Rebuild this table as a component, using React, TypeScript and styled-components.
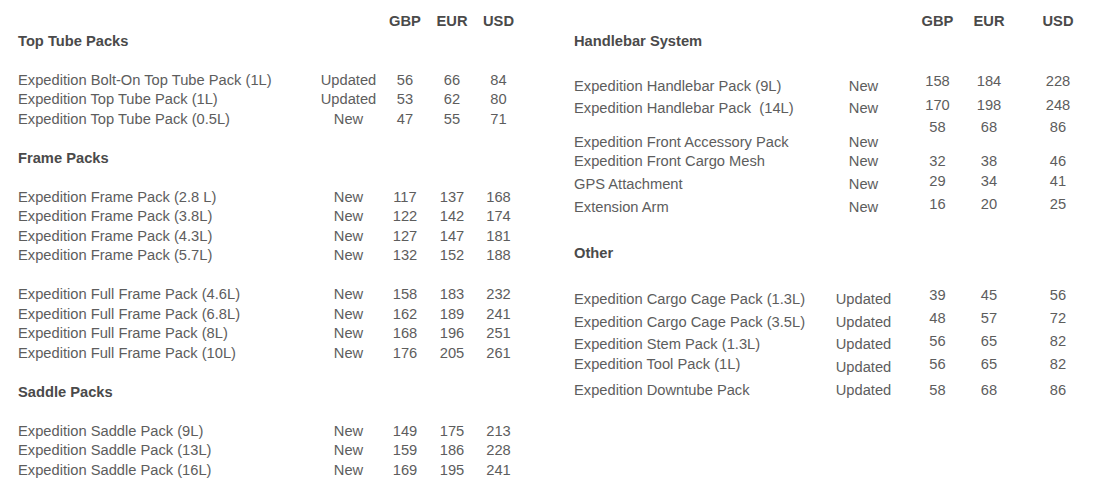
import React from 'react';
import styled, { createGlobalStyle } from 'styled-components';

// drops are how far a cell sits below the top of its row (the scan is not level)
type Item = {
  name: string;
  status: string;
  prices?: number[];
  h?: number;
  nd?: number;
  sd?: number;
  pd?: number;
};

type Section = {
  title: string;
  titleGap?: number;
  rowsGap?: number;
  groups: Item[][];
};

const LEFT_COLS = '297px 67px 46px 48px 45px';
const RIGHT_COLS = '241px 97px 51px 52px 86px';

const leftSections: Section[] = [
  {
    title: 'Top Tube Packs',
    groups: [
      [
        { name: 'Expedition Bolt-On Top Tube Pack (1L)', status: 'Updated', prices: [56, 66, 84] },
        { name: 'Expedition Top Tube Pack (1L)', status: 'Updated', prices: [53, 62, 80] },
        { name: 'Expedition Top Tube Pack (0.5L)', status: 'New', prices: [47, 55, 71] },
      ],
    ],
  },
  {
    title: 'Frame Packs',
    groups: [
      [
        { name: 'Expedition Frame Pack (2.8 L)', status: 'New', prices: [117, 137, 168] },
        { name: 'Expedition Frame Pack (3.8L)', status: 'New', prices: [122, 142, 174] },
        { name: 'Expedition Frame Pack (4.3L)', status: 'New', prices: [127, 147, 181] },
        { name: 'Expedition Frame Pack (5.7L)', status: 'New', prices: [132, 152, 188] },
      ],
      [
        { name: 'Expedition Full Frame Pack (4.6L)', status: 'New', prices: [158, 183, 232] },
        { name: 'Expedition Full Frame Pack (6.8L)', status: 'New', prices: [162, 189, 241] },
        { name: 'Expedition Full Frame Pack (8L)', status: 'New', prices: [168, 196, 251] },
        { name: 'Expedition Full Frame Pack (10L)', status: 'New', prices: [176, 205, 261] },
      ],
    ],
  },
  {
    title: 'Saddle Packs',
    groups: [
      [
        { name: 'Expedition Saddle Pack (9L)', status: 'New', prices: [149, 175, 213] },
        { name: 'Expedition Saddle Pack (13L)', status: 'New', prices: [159, 186, 228] },
        { name: 'Expedition Saddle Pack (16L)', status: 'New', prices: [169, 195, 241] },
      ],
    ],
  },
];

const rightSections: Section[] = [
  {
    title: 'Handlebar System',
    rowsGap: 21,
    groups: [
      [
        { name: 'Expedition Handlebar Pack (9L)', status: 'New', prices: [158, 184, 228], h: 22, nd: 5.5, pd: 1.2 },
        { name: 'Expedition Handlebar Pack  (14L)', status: 'New', prices: [170, 198, 248], h: 23, nd: 6, pd: 2.5 },
        { name: 'Expedition Front Accessory Pack', status: 'New', prices: [58, 68, 86], h: 34, nd: 17, pd: 1.8 },
        { name: 'Expedition Front Cargo Mesh', status: 'New', prices: [32, 38, 46], h: 21, nd: 2.2, pd: 2.2 },
        { name: 'GPS Attachment', status: 'New', prices: [29, 34, 41], h: 22, nd: 3.8, pd: 0.5 },
        { name: 'Extension Arm', status: 'New', prices: [16, 20, 25], h: 22, nd: 4.8, pd: 1.5 },
      ],
    ],
  },
  {
    title: 'Other',
    titleGap: 27.5,
    rowsGap: 23,
    groups: [
      [
        { name: 'Expedition Cargo Cage Pack (1.3L)', status: 'Updated', prices: [39, 45, 56], h: 23, nd: 4.8, pd: 0.5 },
        { name: 'Expedition Cargo Cage Pack (3.5L)', status: 'Updated', prices: [48, 57, 72], h: 23, nd: 4.8, pd: 0.8 },
        { name: 'Expedition Stem Pack (1.3L)', status: 'Updated', prices: [56, 65, 82], h: 22, nd: 3.8, pd: 0.5 },
        { name: 'Expedition Tool Pack (1L)', status: 'Updated', prices: [56, 65, 82], h: 23, nd: 1.5, sd: 4.8, pd: 1.5 },
        { name: 'Expedition Downtube Pack', status: 'Updated', prices: [58, 68, 86], h: 24, nd: 5.2, pd: 5.2 },
      ],
    ],
  },
];

const GlobalStyle = createGlobalStyle`
  html, body {
    margin: 0;
    padding: 0;
    background: #ffffff;
    overflow: hidden;
  }
  body {
    font-family: "Liberation Sans", Arial, Helvetica, sans-serif;
    font-size: 14.7px;
    color: #5d5d5d;
  }
`;

const Page = styled.main`
  display: flex;
  align-items: flex-start;
  gap: 53px;
  width: 1101px;
  height: 500px;
  padding: 12px 0 0 18px;
  box-sizing: border-box;
`;

const Column = styled.section`
  display: flex;
  flex-direction: column;
`;

const Line = styled.div<{ $cols: string; $h?: number }>`
  display: grid;
  grid-template-columns: ${(p) => p.$cols};
  height: ${(p) => p.$h ?? 19.5}px;
  align-items: center;
  line-height: 17px;
`;

const Name = styled.span<{ $drop?: number }>`
  white-space: pre;
  ${(p) => (p.$drop === undefined ? '' : `align-self: start; margin-top: ${p.$drop}px;`)}
`;

const Center = styled.span<{ $drop?: number }>`
  text-align: center;
  white-space: nowrap;
  ${(p) => (p.$drop === undefined ? '' : `align-self: start; margin-top: ${p.$drop}px;`)}
`;

const Currency = styled.span`
  text-align: center;
  font-weight: bold;
  color: #4a4a4a;
`;

const SectionTitle = styled.h2<{ $gap: number }>`
  margin: ${(p) => p.$gap}px 0 0;
  height: 19.5px;
  line-height: 19.5px;
  font-size: 14.7px;
  font-weight: bold;
  color: #4a4a4a;
`;

const Rows = styled.div<{ $gap: number }>`
  margin-top: ${(p) => p.$gap}px;
  display: flex;
  flex-direction: column;
`;

const Table = ({ sections, cols }: { sections: Section[]; cols: string }) => (
  <Column>
    <Line $cols={cols}>
      <span />
      <span />
      <Currency>GBP</Currency>
      <Currency>EUR</Currency>
      <Currency>USD</Currency>
    </Line>
    {sections.map((s, si) => (
      <React.Fragment key={s.title}>
        <SectionTitle $gap={si === 0 ? 0 : s.titleGap ?? 19.5}>{s.title}</SectionTitle>
        {s.groups.map((g, gi) => (
          <Rows key={gi} $gap={gi === 0 ? s.rowsGap ?? 19.5 : 19.5}>
            {g.map((r) => (
              <Line key={r.name} $cols={cols} $h={r.h}>
                <Name $drop={r.nd}>{r.name}</Name>
                <Center $drop={r.sd ?? r.nd}>{r.status}</Center>
                {r.prices?.map((n, i) => (
                  <Center key={i} $drop={r.pd}>
                    {n}
                  </Center>
                ))}
              </Line>
            ))}
          </Rows>
        ))}
      </React.Fragment>
    ))}
  </Column>
);

const App = () => (
  <>
    <GlobalStyle />
    <Page>
      <Table sections={leftSections} cols={LEFT_COLS} />
      <Table sections={rightSections} cols={RIGHT_COLS} />
    </Page>
  </>
);

export default App;
